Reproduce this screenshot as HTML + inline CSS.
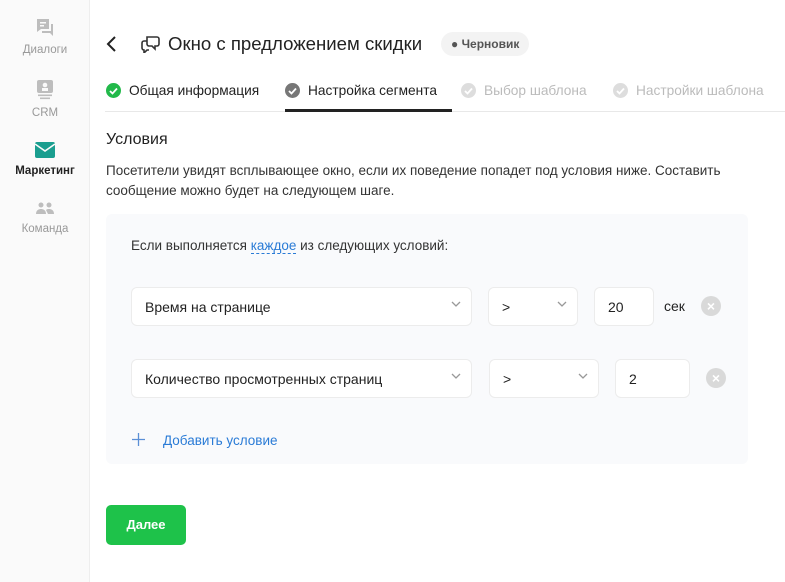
<!DOCTYPE html>
<html><head><meta charset="utf-8"><style>
*{box-sizing:border-box;margin:0;padding:0}
body{width:785px;height:582px;background:#fff;font-family:"Liberation Sans",sans-serif;color:#222;position:relative;overflow:hidden}
.side{position:absolute;left:0;top:0;width:90px;height:582px;background:#fafafa;border-right:1px solid #eee}
.si{position:absolute;left:0;width:90px;text-align:center;font-size:11.5px;color:#999}
.si svg{display:block;margin:0 auto 6px}
.a{position:absolute}
.tab{position:absolute;top:83px;font-size:13.7px;display:flex;align-items:center;gap:8px}
.dot{width:15px;height:15px;border-radius:50%;display:inline-flex;align-items:center;justify-content:center}
.box{position:absolute;background:#fff;border:1px solid #ececec;border-radius:6px;font-size:14px;display:flex;align-items:center;padding-left:13px}
.chev{position:absolute;right:10px;top:12px}
.x{position:absolute;width:20px;height:20px;border-radius:50%;background:#d9d9d9;color:#fff;font-size:14px;font-weight:bold;text-align:center;line-height:20px}
</style></head><body>
<div class="side">
 <div class="si" style="top:18px"><svg width="20" height="20" viewBox="0 0 20 20"><path d="M2 1h12v10H6l-4 3z" fill="#bdbdbd"/><path d="M16 6h2v12l-3-3H7v-2h9z" fill="#bdbdbd"/><rect x="5" y="4" width="6" height="1.5" fill="#fafafa"/><rect x="5" y="7" width="4" height="1.5" fill="#fafafa"/></svg>Диалоги</div>
 <div class="si" style="top:79px"><svg width="20" height="22" viewBox="0 0 20 22"><rect x="2" y="1" width="16" height="13" rx="2" fill="#bdbdbd"/><circle cx="10" cy="6" r="2.3" fill="#fafafa"/><rect x="7" y="9" width="6" height="3" fill="#fafafa"/><rect x="3" y="15.5" width="14" height="1.6" fill="#bdbdbd"/><rect x="5" y="18.5" width="10" height="1.6" fill="#bdbdbd"/></svg>CRM</div>
 <div class="si" style="top:141px;color:#222;font-weight:bold"><svg width="22" height="18" viewBox="0 0 22 18"><rect x="1" y="1" width="20" height="16" rx="2" fill="#1a9e8f"/><path d="M1 3l10 7 10-7" stroke="#fafafa" stroke-width="1.6" fill="none"/></svg>Маркетинг</div>
 <div class="si" style="top:201px"><svg width="20" height="16" viewBox="0 0 20 16"><circle cx="6" cy="4" r="2.5" fill="#bdbdbd"/><circle cx="14" cy="4" r="2.5" fill="#bdbdbd"/><path d="M1 13c0-4 3-5 5-5s5 1 5 5z" fill="#bdbdbd"/><path d="M11 9c1-1 2-1 3-1 2 0 5 1 5 5h-6z" fill="#bdbdbd"/></svg>Команда</div>
</div>
<svg class="a" style="left:106px;top:36px" width="12" height="16" viewBox="0 0 12 16"><path d="M9 1L2 8l7 7" stroke="#222" stroke-width="2" fill="none"/></svg>
<svg class="a" style="left:141px;top:35px" width="19" height="18" viewBox="0 0 19 18"><path d="M6 2h10a2 2 0 012 2v5a2 2 0 01-2 2h-2v3l-3-3H8a2 2 0 01-2-2z M6 6H3a2 2 0 00-2 2v5a2 2 0 002 2v3l3-3h2" stroke="#333" stroke-width="1.6" fill="none"/></svg>
<div class="a" style="left:168px;top:33px;font-size:18.6px;color:#222">Окно с предложением скидки</div>
<div class="a" style="left:441px;top:32px;height:24px;padding:0 10px;background:#f3f3f3;border-radius:12px;font-size:12px;font-weight:bold;color:#555;line-height:24px">● Черновик</div>
<div class="tab" style="left:106px"><span class="dot" style="background:#22b94a"><svg width="9" height="8"><path d="M1 4l2.5 2.5L8 1.5" stroke="#fff" stroke-width="1.8" fill="none"/></svg></span>Общая информация</div>
<div class="tab" style="left:285px"><span class="dot" style="background:#777"><svg width="9" height="8"><path d="M1 4l2.5 2.5L8 1.5" stroke="#fff" stroke-width="1.8" fill="none"/></svg></span>Настройка сегмента</div>
<div class="tab" style="left:461px;color:#bbb"><span class="dot" style="background:#ddd"><svg width="9" height="8"><path d="M1 4l2.5 2.5L8 1.5" stroke="#fff" stroke-width="1.8" fill="none"/></svg></span>Выбор шаблона</div>
<div class="tab" style="left:613px;color:#bbb"><span class="dot" style="background:#ddd"><svg width="9" height="8"><path d="M1 4l2.5 2.5L8 1.5" stroke="#fff" stroke-width="1.8" fill="none"/></svg></span>Настройки шаблона</div>
<div class="a" style="left:105px;top:111px;width:680px;height:1px;background:#e8e8e8"></div>
<div class="a" style="left:285px;top:109px;width:167px;height:3px;background:#222"></div>
<div class="a" style="left:106px;top:131px;font-size:16px">Условия</div>
<div class="a" style="left:106px;top:161px;width:670px;font-size:13.5px;line-height:20px;color:#333">Посетители увидят всплывающее окно, если их поведение попадет под условия ниже. Составить сообщение можно будет на следующем шаге.</div>
<div class="a" style="left:106px;top:214px;width:642px;height:250px;background:#f9fafc;border-radius:6px"></div>
<div class="a" style="left:131px;top:238px;font-size:13.5px;color:#333">Если выполняется <span style="color:#2a7bd6;border-bottom:1px dashed #2a7bd6">каждое</span> из следующих условий:</div>
<div class="box" style="left:131px;top:287px;width:341px;height:39px">Время на странице<svg class="chev" width="10" height="8"><path d="M1 2l4 4 4-4" stroke="#999" stroke-width="1.3" fill="none"/></svg></div>
<div class="box" style="left:488px;top:287px;width:90px;height:39px">&gt;<svg class="chev" width="10" height="8"><path d="M1 2l4 4 4-4" stroke="#999" stroke-width="1.3" fill="none"/></svg></div>
<div class="box" style="left:594px;top:287px;width:60px;height:39px">20</div>
<div class="a" style="left:664px;top:298px;font-size:14px">сек</div>
<div class="x" style="left:701px;top:296px">×</div>
<div class="box" style="left:131px;top:359px;width:341px;height:39px">Количество просмотренных страниц<svg class="chev" width="10" height="8"><path d="M1 2l4 4 4-4" stroke="#999" stroke-width="1.3" fill="none"/></svg></div>
<div class="box" style="left:489px;top:359px;width:110px;height:39px">&gt;<svg class="chev" width="10" height="8"><path d="M1 2l4 4 4-4" stroke="#999" stroke-width="1.3" fill="none"/></svg></div>
<div class="box" style="left:615px;top:359px;width:75px;height:39px">2</div>
<div class="x" style="left:706px;top:368px">×</div>
<svg class="a" style="left:131px;top:432px" width="15" height="15"><path d="M7.5 1v13M1 7.5h13" stroke="#5b8fd6" stroke-width="1.3"/></svg>
<div class="a" style="left:163px;top:433px;font-size:13.5px;color:#2a7bd6">Добавить условие</div>
<div class="a" style="left:106px;top:505px;width:80px;height:40px;background:#1ec24a;border-radius:5px;color:#fff;font-weight:bold;font-size:13px;text-align:center;line-height:40px">Далее</div>
</body></html>
